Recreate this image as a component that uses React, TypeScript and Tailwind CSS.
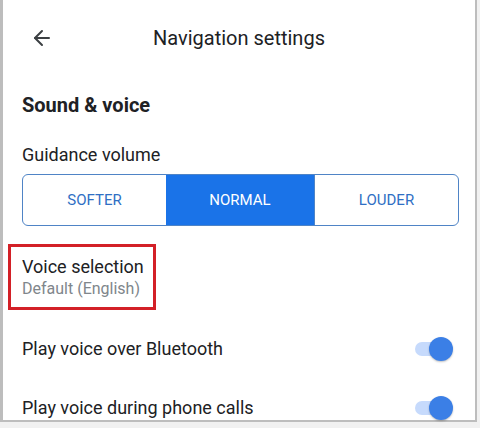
import { ArrowLeft } from "lucide-react";

function Toggle() {
  return (
    <div className="relative h-[24px] w-[38px]">
      <div className="absolute left-0 top-[5px] h-[14px] w-[34px] rounded-full bg-[#c6dafc]" />
      <div className="absolute right-0 top-0 h-[24px] w-[24px] rounded-full bg-[#3b7fe6] shadow-[0_1px_2px_rgba(0,0,0,0.25)]" />
    </div>
  );
}

function SwitchRow({ label }: { label: string }) {
  return (
    <div className="flex h-[59px] items-center justify-between pr-[22px]">
      <span className="text-[18px] text-[#202124]">{label}</span>
      <Toggle />
    </div>
  );
}

export default function App() {
  const options = ["SOFTER", "NORMAL", "LOUDER"];
  const selected = "NORMAL";

  return (
    <div className="h-[428px] w-[480px] overflow-hidden bg-[#f1f1f1] font-['Roboto',sans-serif]">
      <div className="h-[422px] w-[477px] border-b-2 border-l-[3px] border-r-2 border-[#bdbdbd] bg-white">
        <div className="relative flex h-[76px] items-center justify-center">
          <ArrowLeft className="absolute left-[27px] top-[26px] h-[24px] w-[24px] text-[#3c4043]" strokeWidth={2} />
          <span className="text-[20px] text-[#202124]">Navigation settings</span>
        </div>

        <div className="pl-[19px]">
          <div className="flex h-[58px] items-center text-[20px] font-bold text-[#202124]">Sound &amp; voice</div>
          <div className="flex h-[40px] items-center text-[18px] text-[#202124]">Guidance volume</div>

          <div className="flex h-[52px] w-[437px] overflow-hidden rounded-[6px] border border-[#4f84c6]">
            {options.map((o, i) => (
              <div
                key={o}
                className={
                  "flex items-center justify-center text-[15px] " +
                  (i === 1 ? "w-[148px] " : "flex-1 ") +
                  (o === selected ? "bg-[#1a73e8] text-white" : "text-[#2f6fc4]") +
                  (i === 2 ? " border-l border-[#4f84c6]" : "")
                }
              >
                {o}
              </div>
            ))}
          </div>
        </div>

        <div className="ml-[5px] mt-[18px] flex h-[66px] w-[148px] flex-col justify-center border-[3px] border-[#d32027] pl-[11px]">
          <span className="text-[18px] leading-[23px] text-[#202124]">Voice selection</span>
          <span className="text-[16px] leading-[22px] text-[#80868b]">Default (English)</span>
        </div>

        <div className="mt-[9px] pl-[19px]">
          <SwitchRow label="Play voice over Bluetooth" />
          <SwitchRow label="Play voice during phone calls" />
        </div>
      </div>
    </div>
  );
}
